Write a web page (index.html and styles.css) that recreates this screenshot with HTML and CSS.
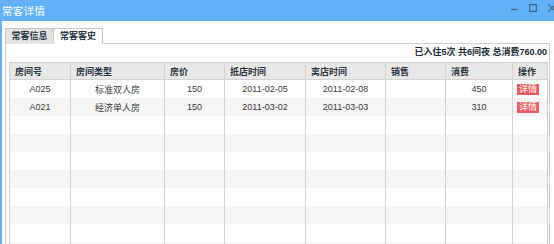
FILE: index.html
```html
<!DOCTYPE html>
<html lang="zh-CN">
<head>
    <meta charset="UTF-8">
    <meta name="viewport" content="width=device-width, initial-scale=1.0">
    <title>常客详情</title>
    <link rel="stylesheet" href="styles.css">
</head>
<body>

    <div class="window">
        <div class="titlebar">
            <span class="title">常客详情</span>
            <div class="controls">
                <svg width="7" height="7" viewBox="0 0 7 7"><path d="M0 4.5h7" stroke="#4f6478" stroke-width="1.2"/></svg>
                <svg width="8" height="8" viewBox="0 0 8 8"><rect x="0.6" y="0.6" width="6.8" height="6.8" fill="none" stroke="#4f6478" stroke-width="1.2"/></svg>
                <svg width="8" height="8" viewBox="0 0 8 8"><path d="M0.5 0.5l7 7M7.5 0.5l-7 7" stroke="#4f6478" stroke-width="1.2"/></svg>
            </div>
        </div>

        <div class="window-body">
            <div class="tabs">
                <span class="tab">常客信息</span>
                <span class="tab active">常客客史</span>
            </div>

            <div class="panel">
                <div class="summary">已入住5次 共6间夜 总消费760.00</div>
                <table class="grid">
                    <colgroup>
                        <col style="width: 61px">
                        <col style="width: 94px">
                        <col style="width: 60px">
                        <col style="width: 81px">
                        <col style="width: 80px">
                        <col style="width: 60px">
                        <col style="width: 67px">
                        <col style="width: 35px">
                    </colgroup>
                    <thead>
                        <tr>
                            <th>房间号</th>
                            <th>房间类型</th>
                            <th>房价</th>
                            <th>抵店时间</th>
                            <th>离店时间</th>
                            <th>销售</th>
                            <th>消费</th>
                            <th>操作</th>
                        </tr>
                    </thead>
                    <tbody>
                        <tr>
                            <td>A025</td>
                            <td>标准双人房</td>
                            <td>150</td>
                            <td>2011-02-05</td>
                            <td>2011-02-08</td>
                            <td></td>
                            <td>450</td>
                            <td><span class="badge">详情</span></td>
                        </tr>
                        <tr>
                            <td>A021</td>
                            <td>经济单人房</td>
                            <td>150</td>
                            <td>2011-03-02</td>
                            <td>2011-03-03</td>
                            <td></td>
                            <td>310</td>
                            <td><span class="badge">详情</span></td>
                        </tr>
                        <tr><td></td><td></td><td></td><td></td><td></td><td></td><td></td><td></td></tr>
                        <tr><td></td><td></td><td></td><td></td><td></td><td></td><td></td><td></td></tr>
                        <tr><td></td><td></td><td></td><td></td><td></td><td></td><td></td><td></td></tr>
                        <tr><td></td><td></td><td></td><td></td><td></td><td></td><td></td><td></td></tr>
                        <tr><td></td><td></td><td></td><td></td><td></td><td></td><td></td><td></td></tr>
                        <tr><td></td><td></td><td></td><td></td><td></td><td></td><td></td><td></td></tr>
                        <tr><td></td><td></td><td></td><td></td><td></td><td></td><td></td><td></td></tr>
                        <tr><td></td><td></td><td></td><td></td><td></td><td></td><td></td><td></td></tr>
                    </tbody>
                </table>
            </div>
        </div>
    </div>

</body>
</html>
```

FILE: styles.css
```css
body {
    font-family: "Liberation Sans", "Noto Sans CJK SC", sans-serif;
    margin: 0;
    background-color: #fff;
    overflow: hidden;
}
.window {
    width: 554px;
    height: 244px;
    overflow: hidden;
    display: flex;
    flex-direction: column;
}
.titlebar {
    height: 21px;
    flex-shrink: 0;
    background-color: #62b0f8;
    display: flex;
    align-items: center;
    padding-left: 2px;
}
.title {
    color: #fff;
    font-size: 10.5px;
    letter-spacing: 0.3px;
    margin-top: -1px;
}
.controls {
    margin-left: auto;
    display: flex;
    align-items: center;
    gap: 11px;
    margin-top: -5px;
    margin-right: -2px;
}
.controls svg {
    display: block;
}
.window-body {
    flex: 1;
    border-left: 2px solid #62b0f8;
    padding: 7px 0 0 3px;
}
.tabs {
    display: flex;
    height: 16px;
    margin-bottom: -1px;
}
.tab {
    box-sizing: border-box;
    width: 49px;
    height: 16px;
    border: 1px solid #c6c6c6;
    border-bottom: none;
    background-color: #e3e3e3;
    color: #2a3a48;
    font-size: 9px;
    font-weight: bold;
    text-align: center;
    line-height: 15px;
}
.tab.active {
    width: 50px;
    margin-left: -1px;
    background-color: #fff;
    border-bottom: 1px solid #fff;
    position: relative;
}
.panel {
    box-sizing: border-box;
    width: 545px;
    height: 300px;
    border: 1px solid #cfcfcf;
    padding: 0 2px 0 3px;
}
.summary {
    height: 18px;
    line-height: 16px;
    text-align: right;
    font-size: 9px;
    font-weight: bold;
    color: #1c2a36;
}
.grid {
    width: 538px;
    table-layout: fixed;
    border-collapse: collapse;
    border: 1px solid #d2d2d2;
    font-size: 9px;
    color: #3a3a3a;
}
.grid th {
    height: 16px;
    padding: 0 5px;
    background-color: #e8e8e8;
    border: 1px solid #d2d2d2;
    text-align: left;
    font-weight: bold;
    color: #2a3440;
}
.grid td {
    height: 18px;
    padding: 0;
    border-left: 1px solid #d2d2d2;
    border-right: 1px solid #d2d2d2;
    text-align: center;
    white-space: nowrap;
}
.grid tbody tr:nth-child(even) {
    background-color: #f5f5f5;
}
.grid td:last-child {
    text-align: left;
    padding-left: 4px;
}
.badge {
    display: inline-block;
    background-color: #f25a60;
    color: #fff;
    font-size: 9px;
    line-height: 11px;
    padding: 0 2px;
}
```
